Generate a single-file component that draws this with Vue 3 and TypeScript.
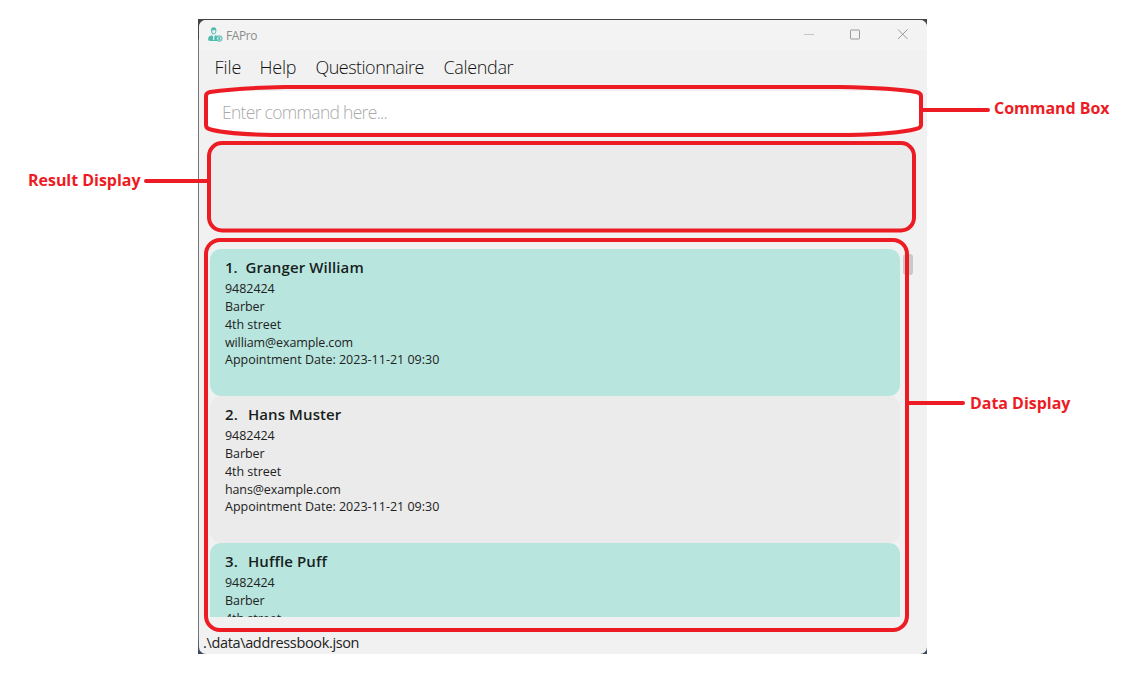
<script setup lang="ts">
interface Person {
  id: number
  name: string
  lines: { kind: string; text: string }[]
}

const menus: string[] = ['File', 'Help', 'Questionnaire', 'Calendar']

const people: Person[] = [
  {
    id: 1,
    name: 'Granger William',
    lines: [
      { kind: 'phone', text: '9482424' },
      { kind: 'job', text: 'Barber' },
      { kind: 'address', text: '4th street' },
      { kind: 'email', text: 'william@example.com' },
      { kind: 'date', text: 'Appointment Date: 2023-11-21 09:30' },
    ],
  },
  {
    id: 2,
    name: 'Hans Muster',
    lines: [
      { kind: 'phone', text: '9482424' },
      { kind: 'job', text: 'Barber' },
      { kind: 'address', text: '4th street' },
      { kind: 'email', text: 'hans@example.com' },
      { kind: 'date', text: 'Appointment Date: 2023-11-21 09:30' },
    ],
  },
  {
    id: 3,
    name: 'Huffle Puff',
    lines: [
      { kind: 'phone', text: '9482424' },
      { kind: 'job', text: 'Barber' },
      { kind: 'address', text: '4th street' },
    ],
  },
]
</script>

<template>
  <main class="stage">
    <div class="backdrop">
      <section class="window">
        <header class="titlebar">
          <svg class="logo" width="15" height="15" viewBox="0 0 15 15">
            <path d="M3 3.600C2.800 1.300 4 .2 5.700 .2S8.600 1.300 8.400 3.600C8.200 6 7 7.600 5.700 7.600S3.200 6 3 3.600Z" fill="#4dbbae" />
            <path d="M4 3.600 7.400 2.900C7.600 5 6.800 6.600 5.700 6.600S4 5 4 3.600Z" fill="#e4f3f0" />
            <path d="M.2 13.400V11.600C.2 9.400 2 8.800 3.900 8.200L5.700 10.200 7.500 8.200C9.500 8.800 11 9.400 11 11V13.400Q5.600 14.800 .2 13.400Z" fill="#4dbbae" />
            <path d="M5.200 9.200H6.300L6.500 12.400 5.700 13.300 4.900 12.400Z" fill="#e4f3f0" />
            <circle cx="11.300" cy="11.500" r="2.800" fill="#c9eae5" stroke="#4dbbae" />
            <path d="M12.300 10.500H11a.5.5 0 0 0 0 1h.7a.5.500 0 0 1 0 1.100H10.300M11.300 9.900v3.300" fill="none" stroke="#4dbbae" stroke-width=".7" />
          </svg>
          <span class="app-name">FAPro</span>
          <svg class="controls" width="106" height="12" viewBox="0 0 106 12">
            <path d="M1 6.500H11" stroke="#c4c4c4" />
            <rect x="47.500" y="2" width="9" height="9" rx=".5" fill="none" stroke="#9a9a9a" />
            <path d="M95 1.500 104.500 11M104.500 1.500 95 11" stroke="#999" fill="none" />
          </svg>
        </header>
        <nav class="menubar">
          <span v-for="menu in menus" :key="menu" class="menu" :class="menu.toLowerCase()">{{ menu }}</span>
        </nav>
        <div class="command"><span>Enter command here...</span></div>
        <div class="result"></div>
        <div class="data">
          <div class="list">
            <article v-for="p in people" :key="p.id" class="card">
              <h2><span class="index">{{ p.id }}.</span><span>{{ p.name }}</span></h2>
              <p v-for="line in p.lines" :key="line.kind" :class="line.kind">{{ line.text }}</p>
            </article>
          </div>
          <div class="thumb"></div>
        </div>
        <footer class="status">.\data\addressbook.json</footer>
      </section>
    </div>
    <svg class="marks" width="1131" height="685" viewBox="0 0 1131 685">
      <path d="M285 87H840Q895 88 916 92Q921 93 921 96V125Q921 128 916 129Q895 134 850 135H272Q225 134 209 129Q206 128 206 125V96Q206 93 210 92Q238 88 285 87Z" />
      <rect x="209" y="143" width="705" height="87.500" rx="13" />
      <rect x="206" y="240" width="701" height="390" rx="14" />
      <path d="M922 110H988M146 181H208M909 403H963" stroke-linecap="round" />
    </svg>
    <span class="label command-label">Command Box</span>
    <span class="label result-label">Result Display</span>
    <span class="label data-label">Data Display</span>
  </main>
</template>

<style>
html, body { margin: 0; overflow: hidden; background: #fff; }
</style>

<style scoped>
.stage {
  position: relative;
  box-sizing: border-box;
  width: 1131px;
  height: 685px;
  padding: 19px 0 0 198px;
  overflow: hidden;
  background: #fff;
  font-family: "Open Sans", "Noto Sans", sans-serif;
  color: #222;
}
.backdrop {
  box-sizing: border-box;
  width: 729px;
  height: 635px;
  padding: 1px 0 0 1px;
  background: linear-gradient(to bottom, #454545 0 20px, #777 21px 615px, #34465f 635px);
}
.window {
  display: flex;
  flex-direction: column;
  width: 728px;
  height: 634px;
  border-radius: 7px;
  background: #f1f1f1;
  overflow: hidden;
}
.window > * { flex: none; }
.titlebar {
  display: flex;
  align-items: center;
  box-sizing: border-box;
  height: 30px;
  padding: 0 18px 0 9px;
  background: #f3f3f3;
}
.logo { margin-top: -1px; }
.app-name { margin-left: 3px; font-size: 12px; letter-spacing: -.4px; color: #8b8b8b; }
.controls { margin-left: auto; margin-top: -2px; }
.menubar { display: flex; height: 41px; padding-left: 15.500px; line-height: 35px; font-size: 18px; font-weight: 300; color: #111; }
.menu { flex: none; white-space: nowrap; letter-spacing: -.35px; }
.file { width: 45px; letter-spacing: -.1px; }
.help { width: 56px; letter-spacing: -.2px; }
.questionnaire { width: 128px; letter-spacing: -.52px; }
.command {
  width: 711px;
  height: 41px;
  margin-left: 9px;
  line-height: 42px;
  background: #fff;
  color: #aaa;
  font-size: 17.500px;
  font-weight: 300;
  letter-spacing: -.7px;
}
.command span { margin-left: 14px; }
.result { width: 703px; height: 85px; margin: 13px 0 0 12px; background: #ebebeb; }
.data { display: flex; height: 368px; margin: 19px 0 0 11px; }
.list { width: 690px; height: 368px; overflow: hidden; }
.card {
  box-sizing: border-box;
  height: 147px;
  padding: 6px 15px 0;
  border-radius: 11px;
  background: #b8e6de;
}
.card:nth-child(even) { background: #ebebeb; }
.card h2 { margin: 0; height: 25px; line-height: 24px; font-size: 15px; font-weight: 600; letter-spacing: .1px; white-space: pre; color: #171e1d; }
.index { margin-right: 10px; }
.card:first-child .index { margin-right: 8px; letter-spacing: -.1px; }
.card p { margin: 0; height: 18px; line-height: 18px; font-size: 12.500px; letter-spacing: -.05px; white-space: nowrap; }
.card .email { height: 17px; letter-spacing: -.12px; }
.card .date { letter-spacing: 0; }
.thumb { width: 10px; height: 21px; margin: 5px 0 0 3px; border-radius: 3px; background: #c9c9c9; }
.status { padding-left: 4px; height: 24px; margin-top: 13px; line-height: 25px; font-size: 14.500px; letter-spacing: -.35px; }
.marks { position: absolute; left: 0; top: 0; fill: none; stroke: #ed1c24; stroke-width: 4; }
.label { position: absolute; font-size: 16px; font-weight: 700; line-height: 20px; letter-spacing: -.03px; white-space: nowrap; color: #ed1c24; }
.command-label { left: 994px; top: 98px; }
.result-label { left: 28px; top: 170px; }
.data-label { left: 970px; top: 393px; }
</style>
